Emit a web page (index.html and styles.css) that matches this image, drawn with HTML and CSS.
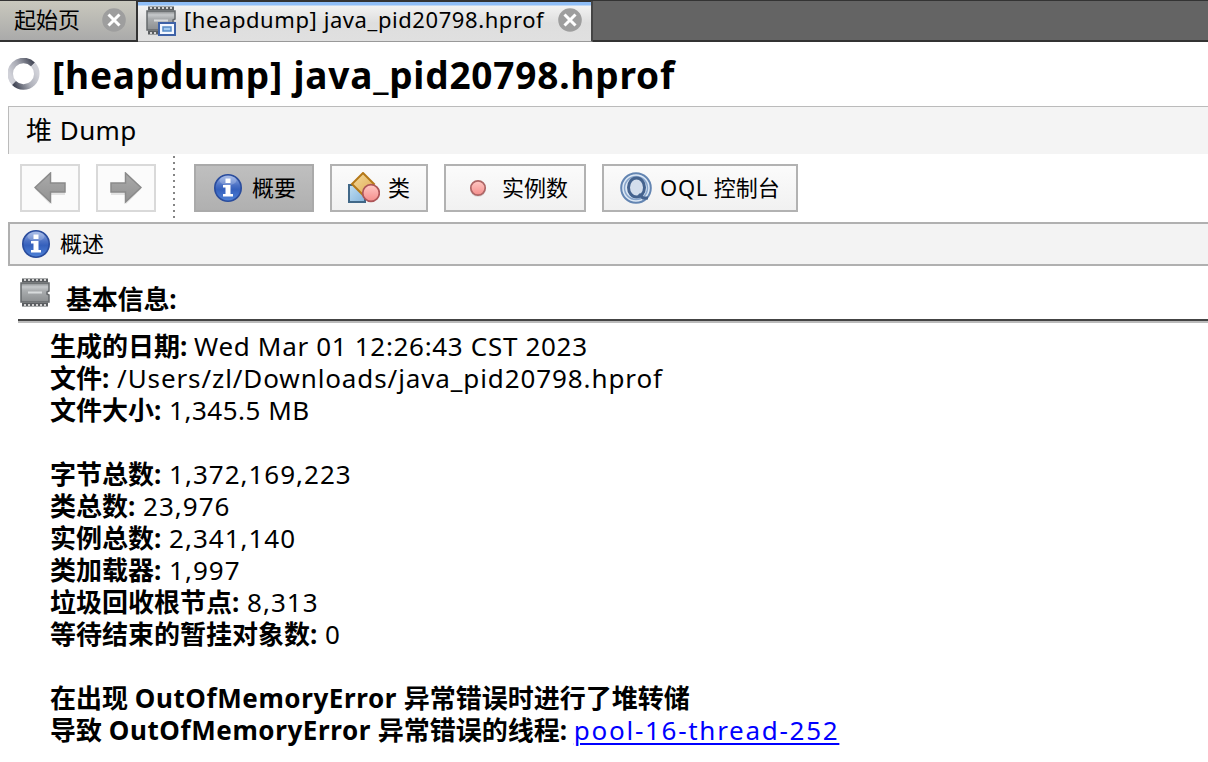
FILE: index.html
```html
<!DOCTYPE html>
<html lang="zh-CN">
<head>
<meta charset="utf-8">
<title>[heapdump] java_pid20798.hprof</title>
<link rel="stylesheet" href="styles.css">
</head>
<body>
<svg class="defs" width="0" height="0" aria-hidden="true">
  <defs>
    <linearGradient id="metal" x1="0" y1="0" x2="0" y2="1"><stop offset="0" stop-color="#85888a"/><stop offset=".2" stop-color="#c6c9cb"/><stop offset=".4" stop-color="#aaadaf"/><stop offset="1" stop-color="#8b8e90"/></linearGradient>
    <linearGradient id="blue" x1="0" y1="0" x2="0" y2="1"><stop offset="0" stop-color="#9db4e6"/><stop offset=".4" stop-color="#4a70c4"/><stop offset=".55" stop-color="#3560bc"/><stop offset="1" stop-color="#4f83d8"/></linearGradient>
    <linearGradient id="arrowfill" x1="0" y1="0" x2="0" y2="1"><stop offset="0" stop-color="#aaa"/><stop offset="1" stop-color="#929292"/></linearGradient>
    <linearGradient id="gold" x1="0" y1="0" x2="1" y2="1"><stop offset="0" stop-color="#f6dca0"/><stop offset="1" stop-color="#dfaa50"/></linearGradient>
    <linearGradient id="sky" x1="0" y1="0" x2="1" y2="1"><stop offset="0" stop-color="#c2dff2"/><stop offset="1" stop-color="#84b4dc"/></linearGradient>
    <linearGradient id="pink" x1="0" y1="0" x2="0" y2="1"><stop offset="0" stop-color="#ffc9c5"/><stop offset="1" stop-color="#f48d8b"/></linearGradient>
    <linearGradient id="arcA" gradientUnits="userSpaceOnUse" x1="3" y1="18" x2="26" y2="6"><stop offset="0" stop-color="#d0d1d8"/><stop offset=".45" stop-color="#a6a8b2"/><stop offset="1" stop-color="#454958"/></linearGradient>
    <linearGradient id="arcB" gradientUnits="userSpaceOnUse" x1="29" y1="14" x2="6" y2="26"><stop offset="0" stop-color="#d0d1d8"/><stop offset=".45" stop-color="#b0b2bb"/><stop offset="1" stop-color="#454958"/></linearGradient>
    <symbol id="chip" viewBox="0 0 30 30">
      <path d="M2 2.500H28M2 26.500H28" stroke="#5b5e61" stroke-width="4"/>
      <path d="M4 2H27M4 27H27" stroke="#d2d2d2" stroke-width="2" stroke-dasharray="2 2"/>
      <path d="M1 5H29V13L27 14V16L29 17V24H1Z" fill="url(#metal)" stroke="#66696c" stroke-width="1.500"/>
      <path d="M8 14.500H22" stroke="#d8dbdc" stroke-width="2"/>
    </symbol>
    <symbol id="info" viewBox="0 0 28 28">
      <circle cx="14" cy="14" r="13.200" fill="url(#blue)" stroke="#2a4c9c" stroke-width="1.600"/>
      <ellipse cx="14" cy="6.500" rx="8.500" ry="4.500" fill="#fff" opacity=".2"/>
      <path d="M11.500 4.500H16.500V9H11.500ZM9 11H16.500V20H19V22.500H9V20H11.500V13.500H9Z" fill="#fff"/>
    </symbol>
    <symbol id="close" viewBox="0 0 24 24">
      <circle cx="12" cy="12" r="11.800" fill="#9e9e9e"/>
      <path d="M6.500 6.500L17.500 17.500M17.500 6.500L6.500 17.500" stroke="#fff" stroke-width="3"/>
    </symbol>
    <symbol id="arrow" viewBox="0 0 32 32">
      <path d="M1 17L16 2V11H31V23H16V32Z" fill="#e2e2e2"/>
      <path d="M1 15.500L16.500 1V11H31V20H16.500V30Z" fill="url(#arrowfill)" stroke="#8a8a8a" stroke-width="1.500"/>
    </symbol>
  </defs>
</svg>

<nav class="tabs">
  <div class="tab tab-start"><span>起始页</span><svg class="close"><use href="#close"/></svg></div>
  <div class="tab tab-active">
    <svg class="tab-chip" viewBox="0 0 30 30"><use href="#chip" width="30" height="30"/><path d="M13 17H29V29H13Z" fill="#f4f8ff" stroke="#3e62a7" stroke-width="2"/><path d="M17 21H25V25H17Z" fill="#a4cbf0" stroke="#568bc6" stroke-width="1.500"/></svg>
    <span class="tab-name">[heapdump] java_pid20798.hprof</span><svg class="close"><use href="#close"/></svg>
  </div>
</nav>

<header class="title">
  <svg class="spinner" viewBox="0 0 32 32"><g fill="none" stroke-width="5.500"><path d="M6 25A13 13 0 0 1 25 6.500" stroke="url(#arcA)"/><path d="M25 6.500A13 13 0 0 1 6 25" stroke="url(#arcB)"/></g></svg>
  <h1>[heapdump] java_pid20798.hprof</h1>
</header>

<main>
  <div class="view-name">堆 <span class="dump">Dump</span></div>
  <div class="toolbar">
    <button class="nav"><svg><use href="#arrow"/></svg></button>
    <button class="nav next"><svg><use href="#arrow"/></svg></button>
    <i class="divider"></i>
    <button class="btn selected"><svg class="info"><use href="#info"/></svg><span>概要</span></button>
    <button class="btn classes"><svg class="icon" viewBox="0 0 32 32"><path d="M1 13H17V30H1Z" fill="url(#sky)" stroke="#416888" stroke-width="2"/><path d="M15 1L26 12L15 23L4 12Z" fill="url(#gold)" stroke="#b47819" stroke-width="2"/><circle cx="23" cy="21" r="8.300" fill="url(#pink)" stroke="#ad5558" stroke-width="1.700"/></svg><span>类</span></button>
    <button class="btn instances"><svg class="icon" viewBox="0 0 32 32"><circle cx="16" cy="17" r="8" fill="#ddd"/><circle cx="16" cy="16" r="7.200" fill="url(#pink)" stroke="#ad6666" stroke-width="1.700"/></svg><span>实例数</span></button>
    <button class="btn oql"><svg class="icon" viewBox="0 0 32 32"><g fill="none"><circle cx="16" cy="16" r="14.800" fill="#dce8f5" stroke="#6385b2" stroke-width="2"/><circle cx="16" cy="16" r="11.500" stroke="#88a5cb" stroke-width="1.500"/><ellipse cx="16.500" cy="15.500" rx="8" ry="9.500" fill="#d4deec" stroke="#45638e" stroke-width="3"/><path d="M19 22L23 26H28" stroke="#45638e" stroke-width="3"/></g></svg><span><span class="oql-name">OQL</span> 控制台</span></button>
  </div>
  <div class="overview"><svg class="info"><use href="#info"/></svg><span>概述</span></div>
  <section>
    <div class="section-head"><svg class="chip"><use href="#chip"/></svg><h2>基本信息:</h2></div>
    <div class="details">
      <p><b>生成的日期:</b> <span class="date">Wed Mar 01 12:26:43 CST 2023</span></p>
      <p><b>文件:</b> <span class="path">/Users/zl/Downloads/java_pid20798.hprof</span></p>
      <p><b>文件大小:</b> <span class="size">1,345.5 MB</span></p>
      <p class="gap"><b>字节总数:</b> <span class="count">1,372,169,223</span></p>
      <p><b>类总数:</b> <span class="count">23,976</span></p>
      <p><b>实例总数:</b> <span class="count">2,341,140</span></p>
      <p><b>类加载器:</b> <span class="count">1,997</span></p>
      <p><b>垃圾回收根节点:</b> <span class="count">8,313</span></p>
      <p><b>等待结束的暂挂对象数:</b> <span class="count">0</span></p>
      <p class="gap"><b>在出现 <span class="error">OutOfMemoryError</span> 异常错误时进行了堆转储</b></p>
      <p><b>导致 <span class="error">OutOfMemoryError</span> 异常错误的线程:</b> <a href="#thread">pool-16-thread-252</a></p>
    </div>
  </section>
</main>
</body>
</html>
```
FILE: styles.css
```css
* { box-sizing: border-box; }
body { margin: 0; height: 762px; overflow: hidden; background: #fff; color: #000; font-family: "Noto Sans", "Noto Sans CJK SC", sans-serif; }
svg { display: block; flex: none; }
.defs { position: absolute; }
h1, h2, p { margin: 0; }

.tabs { display: flex; height: 42px; background: #646464; border-top: 1px solid #333; border-bottom: 2px solid #333; font-size: 22px; line-height: 36px; white-space: nowrap; }
.tab { display: flex; align-items: center; padding-bottom: 1px; }
.tab span { margin-top: -2px; }
.tab-start { width: 138px; padding-left: 14px; gap: 22px; background: linear-gradient(#c9c8bd, #aaa); border-right: 2px solid #333; }
.tab-active { width: 455px; height: 41px; padding: 0 0 2px 8px; background: linear-gradient(#333 0, #333 1px, #8fbef7 1px, #8fbef7 4px, #f2f2f2 5px, #dedede 22px, #e0e0e0); border-right: 2px solid #444; border-bottom: 1px solid #999; }
.tab-chip { width: 30px; height: 30px; margin: 1px 8px 0 0; }
.tab-name { width: 360px; margin-right: 14px; letter-spacing: .58px; }
.close { width: 24px; height: 24px; }

.title { display: flex; height: 64px; padding-left: 8px; align-items: center; gap: 12px; }
.spinner { width: 32px; height: 32px; }
h1 { padding-top: 2px; font-size: 37px; line-height: 62px; letter-spacing: .8px; white-space: nowrap; }

main { padding-left: 8px; }
.view-name { height: 48px; padding-left: 17px; border: 1px solid #bbb; border-width: 1px 0 0 1px; background: #f4f4f4; font-size: 26px; line-height: 46px; }
.dump { letter-spacing: .4px; margin-left: 1px; }
.toolbar { display: flex; height: 68px; padding-left: 12px; align-items: center; }
button { font: inherit; color: inherit; margin: 0; padding: 0; border-radius: 0; }
.nav { display: flex; align-items: center; justify-content: center; width: 60px; height: 48px; margin-right: 16px; border: 2px solid #d9d9d9; background: #fbfbfb; }
.nav svg { width: 32px; height: 32px; }
.next svg { transform: scaleX(-1); }
.divider { width: 2px; height: 62px; margin: -2px 19px 0 1px; background: repeating-linear-gradient(#858585 0 2px, transparent 2px 6px); }
.btn { display: flex; align-items: center; height: 48px; margin-right: 16px; border: 2px solid #b2b2b2; background: linear-gradient(#fbfbfb, #f1f1f1); font-size: 22px; line-height: 40px; white-space: nowrap; }
.btn > span, .overview > span { margin-top: -2px; }
.oql-name { letter-spacing: .7px; }
.info { width: 28px; height: 28px; }
.icon { width: 32px; height: 32px; }
.selected { width: 120px; padding-left: 18px; gap: 10px; background: linear-gradient(#bfbfbf, #b0b0b0); border-color: #aaa; }
.classes { width: 98px; padding-left: 16px; gap: 8px; }
.instances { width: 142px; padding-left: 16px; gap: 8px; }
.oql { width: 196px; padding-left: 16px; gap: 8px; }
.overview { display: flex; align-items: center; height: 44px; padding-left: 12px; gap: 10px; border: 2px solid #b0b0b0; border-right: 0; background: #f3f3f3; font-size: 22px; line-height: 40px; }

.section-head { display: flex; align-items: flex-start; height: 55px; margin-left: 10px; padding: 12px 0 0 2px; gap: 16px; border-bottom: 2px solid #444; box-shadow: 0 2px #bbb; }
.chip { width: 30px; height: 30px; }
h2 { font-size: 26px; line-height: 42px; letter-spacing: -.2px; }
.details { padding: 9px 0 0 42px; font-size: 26px; line-height: 32px; white-space: nowrap; }
.gap { margin-top: 32px; }
.date { letter-spacing: .68px; }
.path { letter-spacing: .9px; margin-left: 1px; }
.size { letter-spacing: .5px; margin-left: 1px; }
.count { letter-spacing: 1px; margin-left: 1px; }
.error { letter-spacing: .6px; }
a { color: #00f; letter-spacing: 1.72px; text-decoration: underline; text-decoration-thickness: 2px; text-underline-offset: 3px; }
```
